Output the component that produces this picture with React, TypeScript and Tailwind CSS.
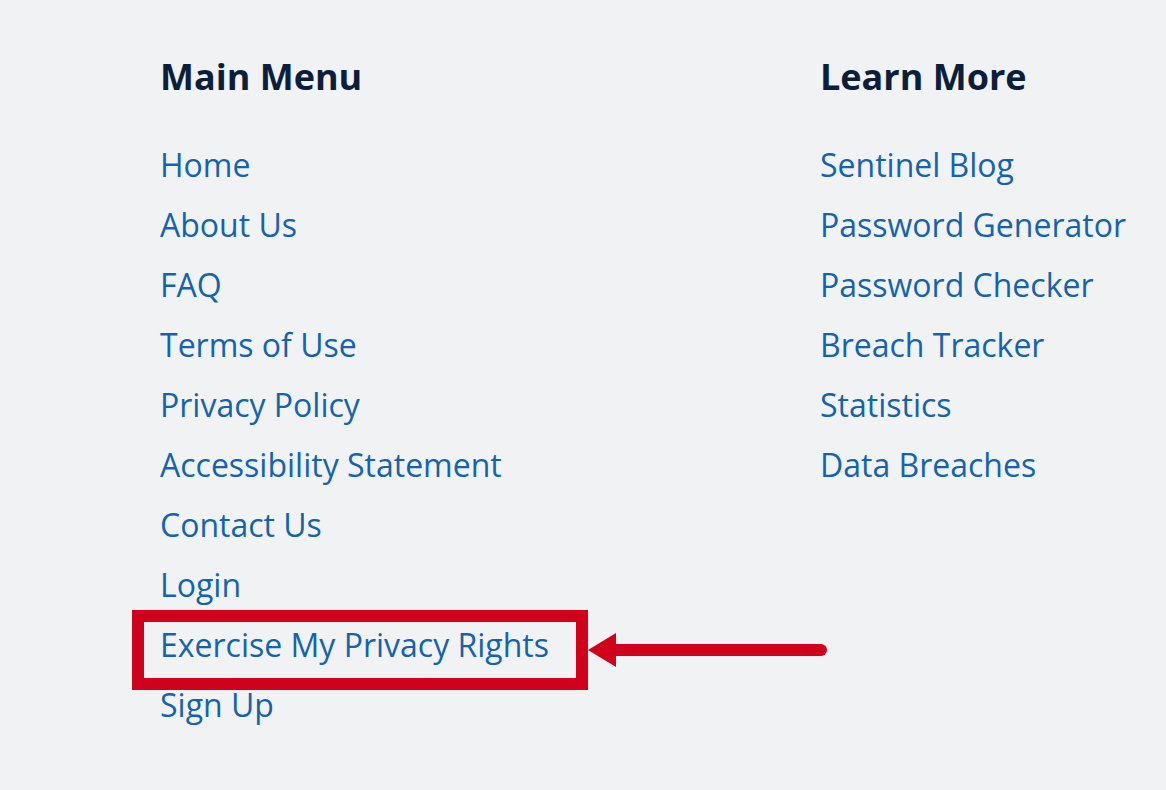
import React from 'react';

const mainMenu = [
  'Home',
  'About Us',
  'FAQ',
  'Terms of Use',
  'Privacy Policy',
  'Accessibility Statement',
  'Contact Us',
  'Login',
  'Exercise My Privacy Rights',
  'Sign Up',
];

const learnMore = [
  'Sentinel Blog',
  'Password Generator',
  'Password Checker',
  'Breach Tracker',
  'Statistics',
  'Data Breaches',
];

const FooterLink = ({ label, highlight }: { label: string; highlight?: boolean }) => (
  <li className="relative h-[60px] flex items-center">
    <a href="#" className="text-[32px] leading-none text-[#1464ab] whitespace-nowrap">
      {label}
    </a>
    {highlight && (
      <>
        {/* annotation box */}
        <span className="absolute left-[-28px] top-[-5px] w-[456px] h-[80px] border-[12px] border-[#d0021b] pointer-events-none" />
        {/* annotation arrow */}
        <svg
          className="absolute left-[428px] top-[15px] pointer-events-none"
          width="244"
          height="40"
          viewBox="0 0 244 40"
        >
          <polygon points="0,20 28,3 28,37" fill="#d0021b" />
          <line x1="26" y1="20" x2="233" y2="20" stroke="#d0021b" strokeWidth="12" strokeLinecap="round" />
        </svg>
      </>
    )}
  </li>
);

const Column = ({ title, items, width }: { title: string; items: string[]; width?: string }) => (
  <div className={width}>
    <h2 className="h-[44px] flex items-center text-[36px] font-bold text-[#0b1e3a] leading-none">{title}</h2>
    <ul className="mt-[36px]">
      {items.map((item) => (
        <FooterLink key={item} label={item} highlight={item === 'Exercise My Privacy Rights'} />
      ))}
    </ul>
  </div>
);

export default function App() {
  return (
    <div
      className="w-[1166px] h-[790px] bg-[#f1f2f4] overflow-hidden pl-[160px] pt-[55px] flex"
      style={{ fontFamily: '"Open Sans", "Noto Sans", sans-serif' }}
    >
      <Column title="Main Menu" items={mainMenu} width="w-[660px] shrink-0" />
      <Column title="Learn More" items={learnMore} />
    </div>
  );
}
